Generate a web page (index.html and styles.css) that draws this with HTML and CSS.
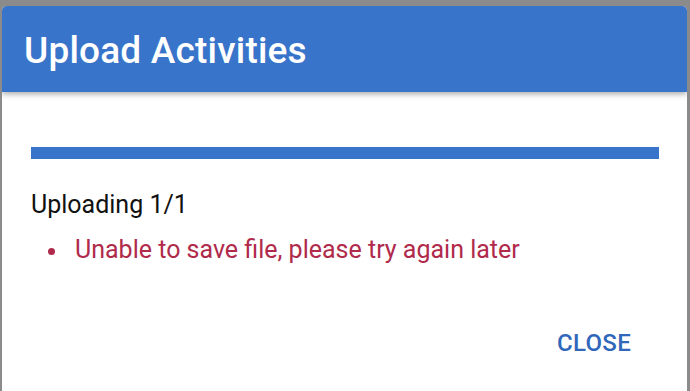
FILE: index.html
```html
<!DOCTYPE html>
<html>
<head>
<meta charset="utf-8">
<link rel="stylesheet" href="styles.css">
</head>
<body>
<div class="backdrop">
  <div class="dialog">
    <div class="dialog-header">
      <h1 class="dialog-title">Upload Activities</h1>
    </div>
    <div class="dialog-body">
      <div class="progress"><div class="progress-fill"></div></div>
      <div class="status">Uploading 1/1</div>
      <ul class="errors">
        <li class="error-item">Unable to save file, please try again later</li>
      </ul>
    </div>
    <div class="dialog-actions">
      <button class="btn-text">CLOSE</button>
    </div>
  </div>
</div>
</body>
</html>
```
FILE: styles.css
```css
html, body {
  margin: 0;
  padding: 0;
  height: 100%;
  background: #8b8b8b;
  font-family: Roboto, "Liberation Sans", sans-serif;
  overflow: hidden;
}
.backdrop {
  padding: 6px 3px 0 2px;
  height: 100%;
  box-sizing: border-box;
}
.dialog {
  background: #ffffff;
  border-radius: 5px;
  height: 400px;
  display: flex;
  flex-direction: column;
  overflow: hidden;
}
.dialog-header {
  background: #3874ca;
  height: 86px;
  display: flex;
  align-items: center;
  padding-left: 22px;
  box-shadow: 0 2px 6px rgba(0, 0, 0, 0.35);
  position: relative;
  z-index: 1;
}
.dialog-title {
  margin: 0;
  color: #ffffff;
  font-size: 37px;
  font-weight: 500;
  letter-spacing: 0.2px;
  line-height: 40px;
  padding-top: 4px;
}
.dialog-body {
  padding: 55px 28px 0 29px;
}
.progress {
  height: 12px;
  background: #3874ca;
}
.progress-fill {
  height: 100%;
  width: 100%;
  background: #3874ca;
}
.status {
  margin-top: 32px;
  font-size: 25px;
  line-height: 28px;
  color: #111111;
}
.errors {
  list-style: none;
  margin: 17px 0 0 0;
  padding-left: 17px;
  font-size: 25px;
  line-height: 28px;
  color: #b02a4b;
}
.error-item {
  display: flex;
  align-items: center;
}
.error-item::before {
  content: "";
  width: 7px;
  height: 7px;
  border-radius: 50%;
  background: #b02a4b;
  margin-right: 20px;
  margin-top: 2px;
}
.dialog-actions {
  display: flex;
  justify-content: flex-end;
  padding: 57px 48px 0 0;
}
.btn-text {
  background: none;
  border: none;
  padding: 8px;
  font-family: Roboto, "Liberation Sans", sans-serif;
  font-size: 24px;
  font-weight: 500;
  color: #3067bb;
  letter-spacing: 0.3px;
  line-height: 28px;
}
```
